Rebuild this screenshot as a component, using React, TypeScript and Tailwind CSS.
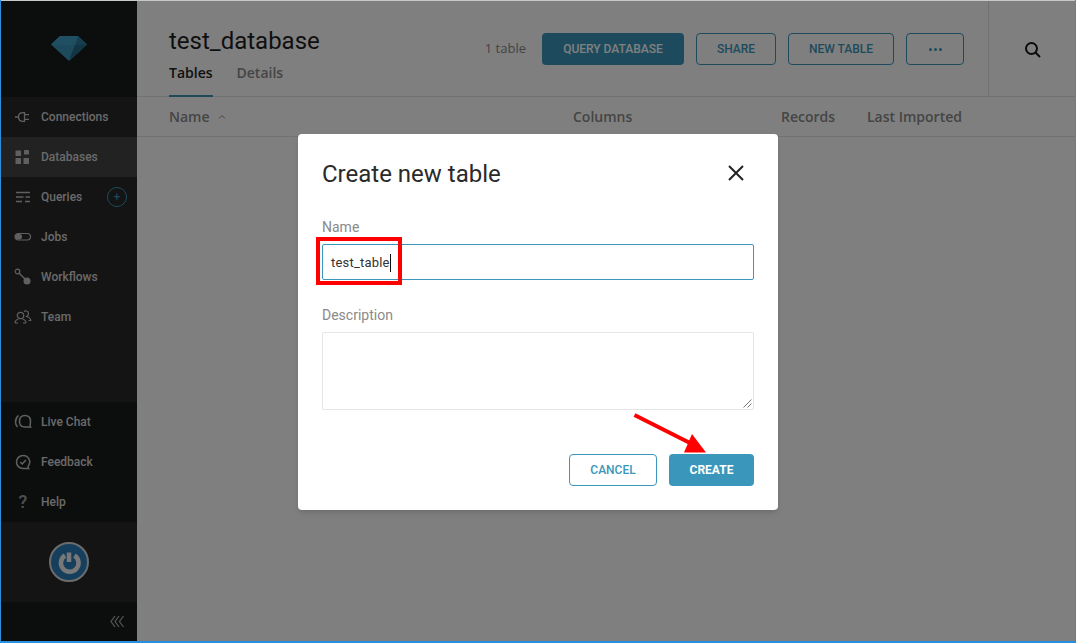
import React from 'react';

const NavItem: React.FC<{ label: string; active?: boolean; icon: React.ReactNode; children?: React.ReactNode }> = ({ label, active, icon, children }) => (
    <div className={`h-10 flex items-center pl-[13px] pr-[10px] ${active ? 'bg-[#444444]' : ''}`}>
        <span className="w-[18px] h-[18px] flex items-center justify-center text-[#c0c0c0] shrink-0">{icon}</span>
        <span className="ml-[9px] text-[12px] font-medium text-[#d4d4d4] leading-none">{label}</span>
        {children}
    </div>
);

const PlugIcon = () => (
    <svg width="18" height="18" viewBox="0 0 18 18" fill="none" stroke="currentColor" strokeWidth="1.3">
        <path d="M1 9H4.5M10.5 4.7H9C6 4.7 4.5 6.7 4.5 9C4.5 11.3 6 13.3 9 13.3H10.5V4.7ZM10.5 6.7H15M10.5 11.3H15" />
    </svg>
);

const DatabasesIcon = () => (
    <svg width="16" height="16" viewBox="0 0 16 16" fill="currentColor">
        <rect x="0.5" y="1.5" width="5.5" height="5.5" rx="0.5" />
        <rect x="9" y="1" width="5" height="4.5" rx="0.5" />
        <rect x="0.5" y="9" width="5.5" height="6" rx="0.5" />
        <rect x="8.5" y="9" width="5.5" height="6" rx="0.5" />
    </svg>
);

const QueriesIcon = () => (
    <svg width="16" height="12" viewBox="0 0 16 12" fill="none" stroke="currentColor" strokeWidth="1.3">
        <path d="M1 1.5H15M1 6H8.5M10.5 6H15M1 10.5H7M10 10.5H15" />
    </svg>
);

const JobsIcon = () => (
    <svg width="18" height="10" viewBox="0 0 18 10" fill="none">
        <rect x="1" y="1.5" width="15.5" height="6.5" rx="3.2" stroke="currentColor" strokeWidth="1.2" />
        <rect x="1" y="2" width="7" height="5.5" rx="2.7" fill="currentColor" />
    </svg>
);

const WorkflowsIcon = () => (
    <svg width="18" height="18" viewBox="0 0 18 18" fill="none">
        <circle cx="3.5" cy="3.5" r="2.3" stroke="currentColor" strokeWidth="1.2" />
        <path d="M5.2 5.2L11.5 11.5" stroke="currentColor" strokeWidth="1.4" />
        <circle cx="13" cy="13" r="3.5" fill="currentColor" />
    </svg>
);

const TeamIcon = () => (
    <svg width="18" height="16" viewBox="0 0 18 16" fill="none" stroke="currentColor" strokeWidth="1.2">
        <circle cx="6.5" cy="6.5" r="3.2" />
        <path d="M1 14C1 11.5 3 10.5 4.5 10M12 14C12 11.5 10 10.5 8.5 10M1 14H4M9 14H12" />
        <path d="M10 2.5C11 1.5 14.5 1.5 14.5 4.5C14.5 6 13.5 7 12.5 7.5C14.5 8 16.5 9 16.8 11.5H14.5" />
    </svg>
);

const LiveChatIcon = () => (
    <svg width="18" height="18" viewBox="0 0 18 18" fill="none" stroke="currentColor" strokeWidth="1.5">
        <path d="M4.5 2.5C2.5 4 1.5 6.5 1.5 9C1.5 11 2.5 13 3.5 14" />
        <path d="M11 2.5C7.5 2.5 5.5 5 5.5 8.5C5.5 12 7.5 14 11 14H16.5C15.5 13 16.5 11 16.5 8.5C16.5 5 14.5 2.5 11 2.5Z" />
    </svg>
);

const FeedbackIcon = () => (
    <svg width="16" height="17" viewBox="0 0 16 17" fill="none" stroke="currentColor" strokeWidth="1.5">
        <path d="M8 1.5A6.5 6.5 0 1 0 8 14.5H13.5C12.8 13.8 13 13 13.3 12A6.5 6.5 0 0 0 8 1.5Z" />
        <path d="M5.2 8L7.3 10L10.8 6" />
    </svg>
);

const HelpIcon = () => <span className="text-[18px] font-medium leading-none text-[#a0a0a0]">?</span>;

const App: React.FC = () => {
    return (
        <div className="relative w-[1076px] h-[643px] overflow-hidden bg-white border-l border-r border-b-2 border-[#2b8fe0] font-['Roboto',sans-serif]">
            <div className="absolute top-0 inset-x-0 h-px bg-[#c8c8c8] z-30" />
            <div className="flex h-full">
                <aside className="w-[136px] shrink-0 flex flex-col bg-[#282828]">
                    <div className="h-[97px] bg-[#181a1a] flex items-center justify-center">
                        <svg width="36" height="25" viewBox="0 0 36 25">
                            <path d="M0 8.5L9 0H27L36 8.5L18 25Z" fill="#3a97bb" />
                            <path d="M18 25L27 0L36 8.5Z" fill="#2c7c9e" />
                            <path d="M18 25L24 9L36 8.5Z" fill="#246b89" />
                            <path d="M0 8.5L24 9L27 0L9 0Z" fill="#409fc4" />
                        </svg>
                    </div>
                    <nav className="flex-1">
                        <NavItem label="Connections" icon={<PlugIcon />} />
                        <NavItem label="Databases" active icon={<DatabasesIcon />} />
                        <NavItem label="Queries" icon={<QueriesIcon />}>
                            <span className="ml-auto w-5 h-5 rounded-full border border-[#3a97bb] text-[#3a97bb] flex items-center justify-center text-[12px] leading-none">+</span>
                        </NavItem>
                        <NavItem label="Jobs" icon={<JobsIcon />} />
                        <NavItem label="Workflows" icon={<WorkflowsIcon />} />
                        <NavItem label="Team" icon={<TeamIcon />} />
                    </nav>
                    <div className="bg-[#181a1a]">
                        <NavItem label="Live Chat" icon={<LiveChatIcon />} />
                        <NavItem label="Feedback" icon={<FeedbackIcon />} />
                        <NavItem label="Help" icon={<HelpIcon />} />
                    </div>
                    <div className="h-20 flex items-center justify-center">
                        <div className="w-10 h-10 rounded-full bg-[#2a7fb8] border-2 border-[#d8d8d8] flex items-center justify-center">
                            <svg width="26" height="26" viewBox="0 0 26 26" fill="none" stroke="#f0f0f0" strokeWidth="4.5">
                                <path d="M9 6.5A8.8 8.8 0 1 0 18.5 6.5" />
                                <path d="M13 3.5V13" />
                            </svg>
                        </div>
                    </div>
                    <div className="h-[39px] bg-[#181a1a] flex items-center justify-end pr-[12px]">
                        <svg width="15" height="13" viewBox="0 0 15 13" fill="none" stroke="#b0b0b0" strokeWidth="1.2">
                            <path d="M5 1L1 6.5L5 12M9 1L5 6.5L9 12M13.5 1L9.5 6.5L13.5 12" />
                        </svg>
                    </div>
                </aside>

                <main className="flex-1 min-w-0 flex flex-col">
                    <header className="h-[97px] flex border-b border-[#e4e4e4] shrink-0">
                        <div className="flex-1 pl-8 pt-[25px]">
                            <h1 className="text-[24px] leading-[32px] text-[#1f1f1f]">test_database</h1>
                            <div className="flex gap-6 mt-[2px] font-['Open_Sans',sans-serif] text-[14px] font-semibold">
                                <span className="h-[38px] pt-[3px] border-b-2 border-[#3a97bb] text-[#222222]">Tables</span>
                                <span className="pt-[3px] text-[#8a8a8a]">Details</span>
                            </div>
                        </div>
                        <div className="flex items-center pt-[2px]">
                            <span className="font-['Open_Sans',sans-serif] text-[13px] text-[#888888] mr-4">1 table</span>
                            <button className="w-[142px] h-8 rounded bg-[#3a97bb] text-white text-[12px] font-medium">QUERY DATABASE</button>
                            <button className="ml-3 w-[80px] h-8 rounded border border-[#3a97bb] text-[#3a97bb] text-[12px] font-medium">SHARE</button>
                            <button className="ml-3 w-[106px] h-8 rounded border border-[#3a97bb] text-[#3a97bb] text-[12px] font-medium">NEW TABLE</button>
                            <button className="ml-3 w-[58px] h-8 rounded border border-[#3a97bb] text-[#3a97bb] flex items-center justify-center gap-[2px]">
                                <span className="w-[3px] h-[3px] rounded-full bg-[#3a97bb]" />
                                <span className="w-[3px] h-[3px] rounded-full bg-[#3a97bb]" />
                                <span className="w-[3px] h-[3px] rounded-full bg-[#3a97bb]" />
                            </button>
                        </div>
                        <div className="ml-6 w-[87px] border-l border-[#e4e4e4] flex items-center justify-center pt-[3px] pl-[2px]">
                            <svg width="18" height="18" viewBox="0 0 18 18" fill="none" stroke="#161616" strokeWidth="2">
                                <circle cx="7.5" cy="7.5" r="5.5" />
                                <path d="M11.5 11.5L16 16" />
                            </svg>
                        </div>
                    </header>
                    <div className="h-10 flex items-center border-b border-[#e4e4e4] font-['Open_Sans',sans-serif] text-[14px] font-semibold text-[#8a8a8a] shrink-0">
                        <span className="ml-8 flex items-center gap-2 w-[404px]">
                            Name
                            <svg width="8" height="5" viewBox="0 0 8 5" fill="none" stroke="#8a8a8a" strokeWidth="1">
                                <path d="M1 4.5L4 1.5L7 4.5" />
                            </svg>
                        </span>
                        <span className="w-[208px]">Columns</span>
                        <span className="w-[86px]">Records</span>
                        <span>Last Imported</span>
                    </div>
                </main>
            </div>

            <div className="absolute inset-0 bg-black/50 flex items-center justify-center pt-[3px] z-20">
                <div className="relative w-[480px] h-[376px] bg-white rounded-[4px] px-6 shadow-md">
                    <div className="flex items-center justify-between pt-[19px] h-[61px]">
                        <h2 className="text-[24px] leading-[32px] text-[#2a2a2a]">Create new table</h2>
                        <svg width="16" height="16" viewBox="0 0 16 16" fill="none" stroke="#222222" strokeWidth="2" className="mr-[10px] mb-[2px]">
                            <path d="M1 1L15 15M15 1L1 15" />
                        </svg>
                    </div>
                    <label className="block mt-[22px] text-[14px] leading-[20px] text-[#8a8a8a]">Name</label>
                    <div className="mt-[7px] h-9 border border-[#3a97bb] rounded-[2px] flex items-center pl-2 pt-[1px] text-[13px] tracking-[0.2px] text-[#333333]">
                        test_table<span className="w-px h-[18px] bg-[#111111]" />
                    </div>
                    <label className="block mt-[25px] text-[14px] leading-[20px] text-[#8a8a8a]">Description</label>
                    <div className="relative mt-[7px] h-[78px] border border-[#e6e6e6] rounded-[2px]">
                        <svg width="9" height="9" viewBox="0 0 9 9" fill="none" stroke="#555555" strokeWidth="0.8" className="absolute right-[1px] bottom-[1px]">
                            <path d="M0.5 8.5L8.5 0.5M4.5 8.5L8.5 4.5" />
                        </svg>
                    </div>
                    <div className="flex justify-end gap-3 mt-[44px]">
                        <button className="w-[88px] h-8 rounded border border-[#3a97bb] text-[#3a97bb] text-[12px] font-medium">CANCEL</button>
                        <button className="w-[85px] h-8 rounded bg-[#3a97bb] text-white text-[12px] font-bold">CREATE</button>
                    </div>

                    <div className="absolute left-[18px] top-[103px] w-[86px] h-[48px] border-[4px] border-[#ff0000]" />
                    <svg width="80" height="46" viewBox="0 0 80 46" className="absolute left-[335px] top-[278px]">
                        <path d="M1.5 3L58 31.5" stroke="#ff0000" strokeWidth="4" fill="none" />
                        <path d="M51 40.5L59 22L73 40.5Z" fill="#ff0000" />
                    </svg>
                </div>
            </div>
        </div>
    );
};

export default App;
